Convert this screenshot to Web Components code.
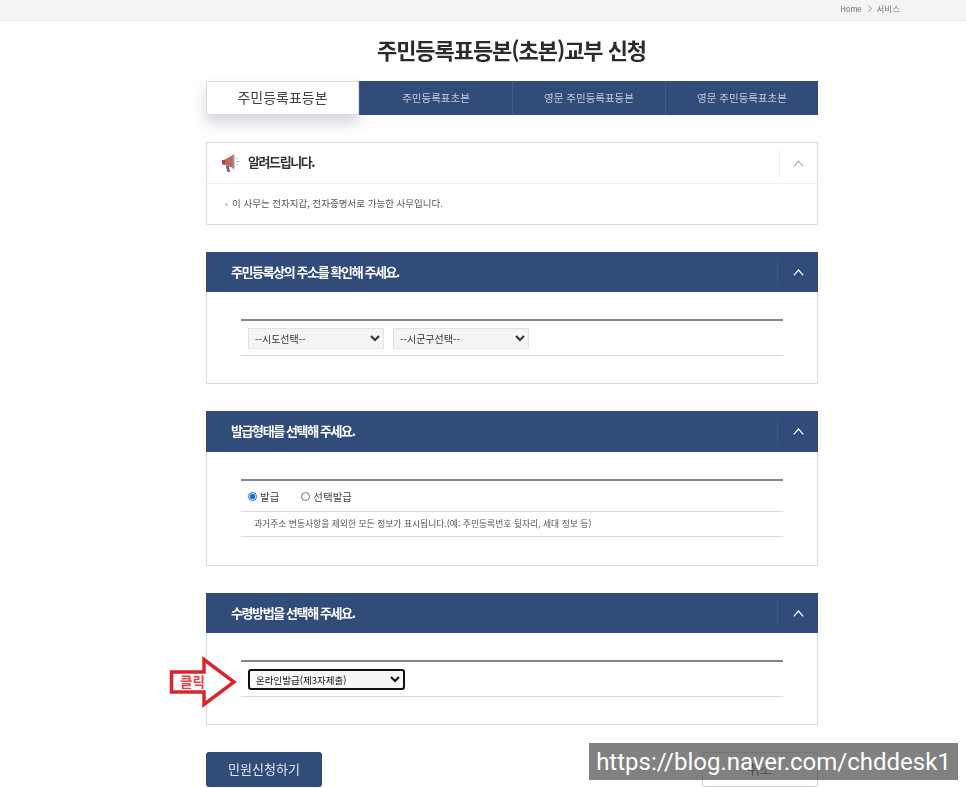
<!DOCTYPE html>
<html lang="ko">
<head>
<meta charset="utf-8">
<title>주민등록표등본(초본)교부 신청</title>
<style>
    html, body {
        margin: 0;
        background: #fff;
        font-family: "Noto Sans CJK KR", "Noto Sans", sans-serif;
        color: #333;
    }
    body {
        position: relative;
        height: 788px;
        overflow: hidden;
    }
    p.notice {
        position: relative;
        margin: 0;
        padding: 13px 0 0 25px;
        font-size: 9.5px;
        line-height: 13px;
        color: #555;
    }
    p.notice::before {
        content: "";
        position: absolute;
        left: 18px;
        top: 19px;
        width: 3px;
        height: 3px;
        border-radius: 50%;
        background: #c7c7c7;
    }
</style>
</head>
<body>

<top-bar></top-bar>

<page-main>
    <span slot="title">주민등록표등본(초본)교부 신청</span>

    <tab-bar></tab-bar>

    <info-panel variant="notice" heading="알려드립니다." style="height: 83px; margin-top: 27px;">
        <p class="notice">이 사무는 전자지갑, 전자증명서로 가능한 사무입니다.</p>
    </info-panel>

    <info-panel heading="주민등록상의 주소를 확인해 주세요." style="height: 132px; margin-top: 27px;">
        <form-row first height="37">
            <native-select label="--시도선택--" width="136"></native-select>
            <native-select label="--시군구선택--" width="136"></native-select>
        </form-row>
    </info-panel>

    <info-panel heading="발급형태를 선택해 주세요." style="height: 155px; margin-top: 27px;" head="41">
        <form-row first height="33">
            <radio-group></radio-group>
        </form-row>
        <form-row height="25" indent="13">
            <small-note>과거주소 변동사항을 제외한 모든 정보가 표시됩니다.(예: 주민등록번호 뒷자리, 세대 정보 등)</small-note>
        </form-row>
    </info-panel>

    <info-panel heading="수령방법을 선택해 주세요." style="height: 132px; margin-top: 27px;">
        <form-row first height="37">
            <native-select label="온라인발급(제3자제출)" width="157" focused></native-select>
        </form-row>
    </info-panel>

    <action-bar></action-bar>
</page-main>

<click-arrow></click-arrow>
<blog-mark>https://blog.naver.com/chddesk1</blog-mark>

<script>
const NAVY = '#324c79';

const chevron = (color) => `
    <svg width="11" height="7" viewBox="0 0 11 7" fill="none" stroke="${color}" stroke-width="1.2">
        <polyline points="0.8,6.3 5.5,1 10.2,6.3"></polyline>
    </svg>`;

class TopBar extends HTMLElement {
    constructor () {
        super();
        this.attachShadow({ mode: 'open' }).innerHTML = `
            <style>
                :host {
                    display: flex;
                    justify-content: flex-end;
                    align-items: center;
                    box-sizing: border-box;
                    height: 21px;
                    padding: 0 66px 4px 0;
                    background: #f5f4f4;
                    border-bottom: 1px solid #ececec;
                    font-size: 7.5px;
                    color: #666;
                    filter: blur(0.3px);
                }
                svg { margin: 0 5px 0 6px; }
                .here { font-size: 8.5px; color: #777; }
            </style>
            <span>Home</span>
            <svg width="4" height="7" viewBox="0 0 4 7" fill="none" stroke="#777" stroke-width="0.8"><polyline points="0.5,0.5 3.5,3.5 0.5,6.5"></polyline></svg>
            <span class="here">서비스</span>
        `;
    }
}

class PageMain extends HTMLElement {
    constructor () {
        super();
        this.attachShadow({ mode: 'open' }).innerHTML = `
            <style>
                :host {
                    display: block;
                    box-sizing: border-box;
                    width: 612px;
                    margin-left: 206px;
                    filter: blur(0.35px);
                }
                h1 {
                    box-sizing: border-box;
                    margin: 0;
                    height: 60px;
                    padding-right: 1px;
                    line-height: 57px;
                    text-align: center;
                    font-size: 22px;
                    font-weight: 700;
                    letter-spacing: -1.05px;
                    color: #2b2b2b;
                }
            </style>
            <h1><slot name="title"></slot></h1>
            <slot></slot>
        `;
    }
}

class TabBar extends HTMLElement {
    constructor () {
        super();
        const tabs = ['주민등록표등본', '주민등록표초본', '영문 주민등록표등본', '영문 주민등록표초본'];
        this.attachShadow({ mode: 'open' }).innerHTML = `
            <style>
                :host {
                    display: grid;
                    grid-template-columns: repeat(4, 1fr);
                    height: 34px;
                    background: ${NAVY};
                }
                div {
                    display: flex;
                    align-items: center;
                    justify-content: center;
                    box-sizing: border-box;
                    padding-bottom: 2px;
                    font-size: 10.5px;
                    color: #c4ccdb;
                    border-left: 1px solid #43598a;
                }
                div:first-of-type {
                    background: #fff;
                    color: #444;
                    font-size: 14px;
                    border: 1px solid #d8dde6;
                    box-shadow: 0 8px 14px rgba(60, 70, 100, .22);
                }
            </style>
            ${tabs.map(t => `<div>${t}</div>`).join('')}
        `;
    }
}

class InfoPanel extends HTMLElement {
    constructor () {
        super();
        this.attachShadow({ mode: 'open' }).innerHTML = `
            <style>
                :host {
                    display: block;
                    box-sizing: border-box;
                    border: 1px solid #dcdcdc;
                }
                header {
                    display: flex;
                    align-items: center;
                    box-sizing: border-box;
                    height: 40px;
                    padding-left: 25px;
                    background: ${NAVY};
                    color: #fff;
                    font-size: 13px;
                    font-weight: 700;
                    letter-spacing: -1.4px;
                    margin: -1px -1px 0;
                }
                .title { flex: 1; padding-bottom: 2px; }
                .toggle {
                    display: flex;
                    align-items: center;
                    justify-content: center;
                    width: 40px;
                    height: 26px;
                    border-left: 1px solid #3f5785;
                }
                .body { padding: 27px 34px 0; }
                :host([variant="notice"]) header {
                    height: 41px;
                    margin: 0;
                    padding-left: 14px;
                    background: #fff;
                    color: #333;
                    border-bottom: 1px solid #efefef;
                }
                :host([variant="notice"]) .title { padding-bottom: 3px; }
                :host([variant="notice"]) .toggle { border-left-color: #eee; height: 27px; width: 37px; }
                :host([variant="notice"]) .body { padding: 0; }
                svg.horn { margin-right: 7px; }
            </style>
            <header>
                <span class="icon"></span>
                <span class="title"></span>
                <span class="toggle"></span>
            </header>
            <div class="body"><slot></slot></div>
        `;
    }

    connectedCallback () {
        const root = this.shadowRoot;
        const notice = this.getAttribute('variant') === 'notice';
        root.querySelector('.title').textContent = this.getAttribute('heading');
        root.querySelector('.toggle').innerHTML = chevron(notice ? '#b5b5b5' : '#fff');
        if (this.hasAttribute('head')) {
            root.querySelector('header').style.height = this.getAttribute('head') + 'px';
        }
        if (notice) {
            root.querySelector('.icon').innerHTML = `
                <svg class="horn" width="20" height="20" viewBox="0 0 20 20" style="display:block">
                    <path d="M2 7.5 L12 2 L12 15 L2 11 Z" fill="#c9645c"></path>
                    <rect x="1" y="7" width="3" height="4.5" fill="#a64a45"></rect>
                    <path d="M4.5 12 L8 13.5 L9 19 L6.5 19 Z" fill="#5d6b80"></path>
                    <rect x="11.5" y="1.5" width="2" height="14.5" rx="1" fill="#8b95a5"></rect>
                    <path d="M15 6 L17 5 M15.5 8.5 L18.5 8.5 M15 11 L17 12" stroke="#b8b8b8" stroke-width="1"></path>
                </svg>`;
        }
    }
}

class FormRow extends HTMLElement {
    constructor () {
        super();
        this.attachShadow({ mode: 'open' }).innerHTML = `
            <style>
                :host {
                    display: flex;
                    align-items: center;
                    gap: 9px;
                    box-sizing: border-box;
                    padding-left: 7px;
                    border-bottom: 1px solid #dcdcdc;
                }
                :host([first]) { border-top: 2px solid #84868e; padding-top: 1px; }
            </style>
            <slot></slot>
        `;
    }

    connectedCallback () {
        this.style.height = this.getAttribute('height') + 'px';
        if (this.hasAttribute('indent')) this.style.paddingLeft = this.getAttribute('indent') + 'px';
    }
}

class NativeSelect extends HTMLElement {
    constructor () {
        super();
        this.attachShadow({ mode: 'open' }).innerHTML = `
            <style>
                :host { display: block; }
                select {
                    display: block;
                    box-sizing: border-box;
                    height: 21px;
                    padding: 0 0 0 2px;
                    background-color: #f4f4f4;
                    border: 1px solid #e2e2e2;
                    border-radius: 0;
                    font-family: inherit;
                    font-size: 10px;
                    color: #333;
                    outline: none;
                }
                :host([focused]) select {
                    background-color: #f8f8f8;
                    border: 2px solid #111;
                    border-radius: 3px;
                    color: #111;
                    font-size: 9.5px;
                }
            </style>
            <select></select>
        `;
    }

    connectedCallback () {
        const select = this.shadowRoot.querySelector('select');
        select.style.width = this.getAttribute('width') + 'px';
        select.innerHTML = `<option>${this.getAttribute('label')}</option>`;
    }
}

class RadioGroup extends HTMLElement {
    constructor () {
        super();
        this.attachShadow({ mode: 'open' }).innerHTML = `
            <style>
                :host {
                    display: flex;
                    align-items: center;
                    font-size: 10.5px;
                    color: #444;
                }
                label { display: flex; align-items: center; gap: 3px; }
                label + label { margin-left: 22px; }
                input {
                    width: 9px;
                    height: 9px;
                    margin: 0;
                    accent-color: #1a6fd0;
                }
            </style>
            <label><input type="radio" name="kind" checked>발급</label>
            <label><input type="radio" name="kind">선택발급</label>
        `;
    }
}

class SmallNote extends HTMLElement {
    constructor () {
        super();
        this.attachShadow({ mode: 'open' }).innerHTML = `
            <style>
                :host {
                    display: block;
                    padding-bottom: 2px;
                    font-size: 8.8px;
                    color: #555;
                    white-space: nowrap;
                }
            </style>
            <slot></slot>
        `;
    }
}

class ActionBar extends HTMLElement {
    constructor () {
        super();
        this.attachShadow({ mode: 'open' }).innerHTML = `
            <style>
                :host {
                    display: flex;
                    justify-content: space-between;
                    margin-top: 27px;
                }
                button {
                    box-sizing: border-box;
                    width: 116px;
                    height: 35px;
                    border-radius: 3px;
                    font-family: inherit;
                    font-size: 13px;
                    padding: 0 0 2px;
                }
                .primary { background: ${NAVY}; color: #e4e8ef; border: 0; }
                .cancel { background: #fff; color: #444; border: 1px solid #cfcfcf; }
            </style>
            <button class="primary">민원신청하기</button>
            <button class="cancel">취소</button>
        `;
    }
}

class ClickArrow extends HTMLElement {
    constructor () {
        super();
        this.attachShadow({ mode: 'open' }).innerHTML = `
            <style>
                :host {
                    position: absolute;
                    left: 169px;
                    top: 656px;
                    width: 68px;
                    height: 52px;
                    filter: blur(0.3px);
                }
                svg { display: block; }
                span {
                    position: absolute;
                    left: 11px;
                    top: 16px;
                    font-size: 13.5px;
                    line-height: 19px;
                    font-weight: 700;
                    color: #e4404a;
                }
            </style>
            <svg width="68" height="52" viewBox="0 0 68 52">
                <polygon points="2.5,16 35,16 35,3.5 65,26 35,48.5 35,36 2.5,36" fill="#fff" stroke="#d5282e" stroke-width="3.5"></polygon>
            </svg>
            <span>클릭</span>
        `;
    }
}

class BlogMark extends HTMLElement {
    constructor () {
        super();
        this.attachShadow({ mode: 'open' }).innerHTML = `
            <style>
                :host {
                    position: absolute;
                    left: 589px;
                    top: 743px;
                    width: 369px;
                    height: 37px;
                    display: flex;
                    align-items: center;
                    justify-content: center;
                    background: rgba(80, 80, 80, .72);
                    color: #fff;
                    font-family: Roboto, "Noto Sans", sans-serif;
                    font-size: 24px;
                    white-space: nowrap;
                }
            </style>
            <slot></slot>
        `;
    }
}

customElements.define('top-bar', TopBar);
customElements.define('page-main', PageMain);
customElements.define('tab-bar', TabBar);
customElements.define('info-panel', InfoPanel);
customElements.define('form-row', FormRow);
customElements.define('native-select', NativeSelect);
customElements.define('radio-group', RadioGroup);
customElements.define('small-note', SmallNote);
customElements.define('action-bar', ActionBar);
customElements.define('click-arrow', ClickArrow);
customElements.define('blog-mark', BlogMark);
</script>
</body>
</html>
